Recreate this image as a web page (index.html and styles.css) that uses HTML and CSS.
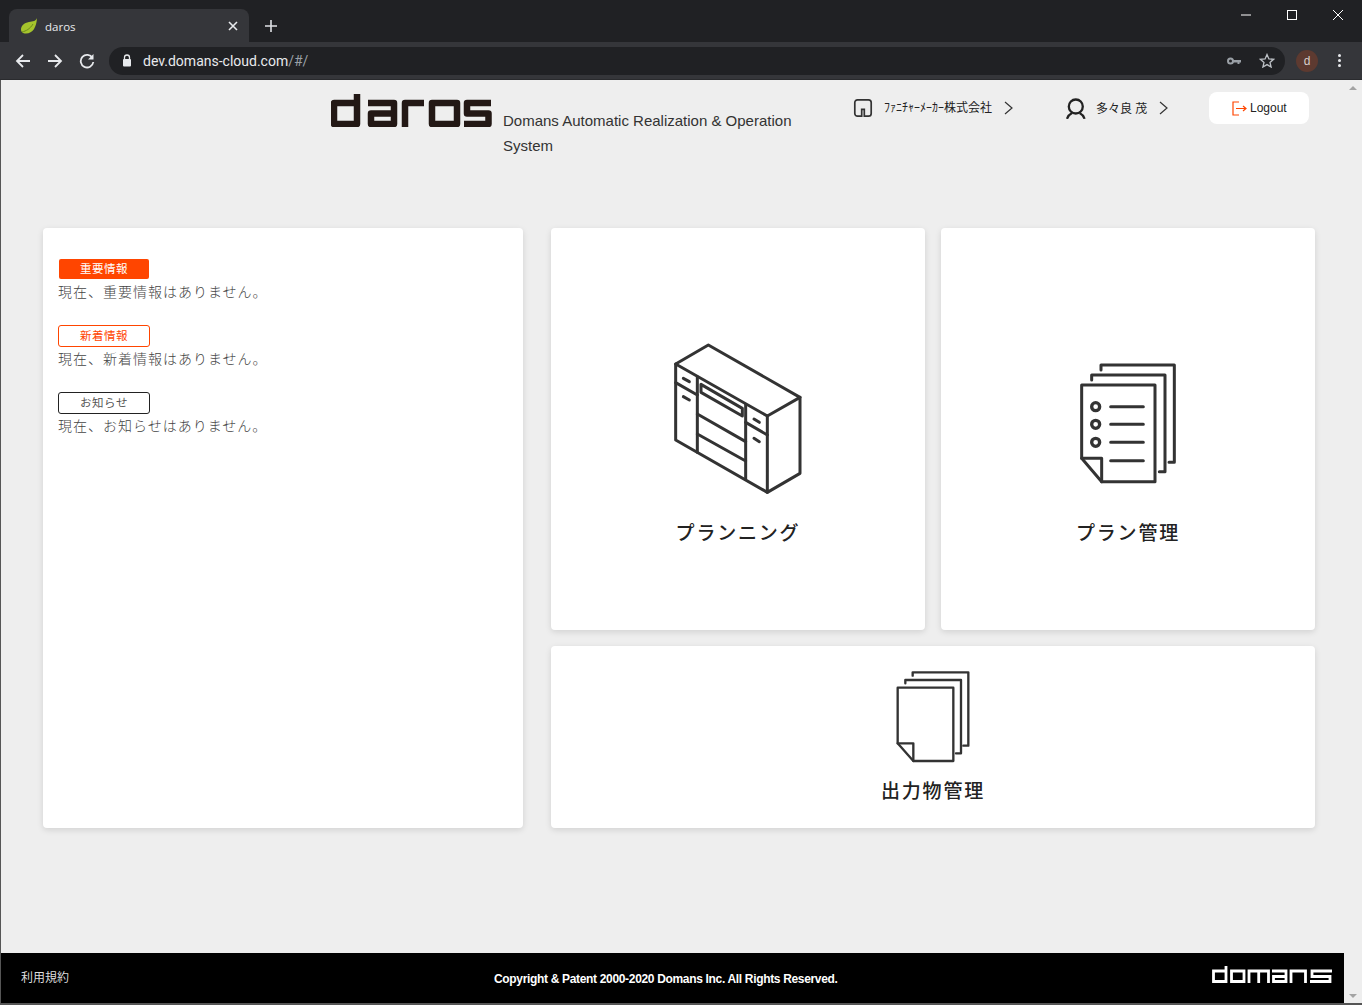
FILE: index.html
```html
<!DOCTYPE html>
<html lang="ja">
<head>
    <meta charset="UTF-8">
    <title>daros</title>
    <link rel="stylesheet" href="styles.css">
</head>
<body>
    <div class="browser">
        <div class="tabstrip">
            <div class="tab">
                <svg class="favicon" width="16" height="16" viewBox="0 0 16 16"><path d="M16 0C15 3 12 3.500 8 4 3 4.700 0 8 0 11.500 0 13.500 1.500 15.500 5 15.500 12 15.500 15.500 9 16 0Z" fill="#a5c42c"/><path d="M1 14C5 13 9 11 12 6" stroke="#6d8a1c" stroke-width="1" fill="none"/></svg>
                <span class="tab-title">daros</span>
                <svg class="tab-close" width="10" height="10" viewBox="0 0 10 10"><path d="M1 1L9 9M9 1L1 9" stroke="#e8eaed" stroke-width="1.600"/></svg>
            </div>
            <svg class="new-tab" width="12" height="12" viewBox="0 0 12 12"><path d="M6 0V12M0 6H12" stroke="#dfe1e5" stroke-width="1.600"/></svg>
            <div class="win-controls">
                <svg width="10" height="10" viewBox="0 0 10 10"><path d="M0 5H10" stroke="#fff"/></svg>
                <svg width="10" height="10" viewBox="0 0 10 10"><rect x="0.500" y="0.500" width="9" height="9" fill="none" stroke="#fff"/></svg>
                <svg width="10" height="10" viewBox="0 0 10 10"><path d="M0 0L10 10M10 0L0 10" stroke="#fff"/></svg>
            </div>
        </div>
        <div class="toolbar">
            <svg class="nav-icon" width="16" height="16" viewBox="0 0 16 16"><path d="M15 8H2M8 2L2 8L8 14" fill="none" stroke="#e8eaed" stroke-width="1.800"/></svg>
            <svg class="nav-icon" width="16" height="16" viewBox="0 0 16 16"><path d="M1 8H14M8 2L14 8L8 14" fill="none" stroke="#e8eaed" stroke-width="1.800"/></svg>
            <svg class="nav-icon" width="16" height="16" viewBox="0 0 16 16"><path d="M13.500 5A6.300 6.300 0 1 0 14.300 9" fill="none" stroke="#e8eaed" stroke-width="1.800"/><path d="M14.500 1V6.500H9Z" fill="#e8eaed"/></svg>
            <div class="omnibox">
                <svg class="lock" width="10" height="13" viewBox="0 0 10 13"><path d="M2.500 6V3.500a2.500 2.500 0 0 1 5 0V6" fill="none" stroke="#e8eaed" stroke-width="1.300"/><rect x="1" y="5" width="8" height="7.500" rx="1" fill="#e8eaed"/></svg>
                <span class="url">dev.domans-cloud.com<span class="url-path">/#/</span></span>
                <svg class="key" width="14" height="8" viewBox="0 0 14 8"><circle cx="3.500" cy="4" r="2.500" fill="none" stroke="#9aa0a6" stroke-width="2"/><path d="M6 3H14V5.500H12.500V7H10.500V5.500H6Z" fill="#9aa0a6"/></svg>
                <svg class="star" width="16" height="15" viewBox="0 0 16 15"><path d="M8 1.500L9.900 5.900 14.600 6.300 11 9.400 12.100 14 8 11.600 3.900 14 5 9.400 1.400 6.300 6.100 5.900Z" fill="none" stroke="#bdc1c6" stroke-width="1.300"/></svg>
            </div>
            <span class="avatar">d</span>
            <span class="menu-dots"><i></i><i></i><i></i></span>
        </div>
        <div class="viewport">
            <div class="page">
                <header class="header">
                    <svg class="logo" width="161" height="34" viewBox="0 0 161 34" role="img" aria-label="daros">
                        <g fill="none" stroke="#231815" stroke-width="6.500" stroke-linejoin="round">
                            <path d="M26 1V31H3V10H26"/>
                            <path d="M37 10H63V31H40V20.500H63"/>
                            <path d="M74 34V10H93"/>
                            <path d="M101 10H126V31H101Z"/>
                            <path d="M160 10H136V20.500H157.500V31H133"/>
                        </g>
                    </svg>
                    <p class="tagline">Domans Automatic Realization &amp; Operation System</p>
                    <div class="head-item org">
                        <svg width="20" height="20" viewBox="0 0 20 20"><path d="M4.500 1.800H15.500A2.700 2.700 0 0 1 18.200 4.500V15.500A2.700 2.700 0 0 1 15.500 18.200H11.300V11.400H8.700V18.200H4.500A2.700 2.700 0 0 1 1.800 15.500V4.500A2.700 2.700 0 0 1 4.500 1.800Z" fill="none" stroke="#333" stroke-width="1.700"/></svg>
                        <span class="org-name">ﾌｧﾆﾁｬｰﾒｰｶｰ株式会社</span>
                        <svg class="chevron" width="9" height="14" viewBox="0 0 9 14"><path d="M1 1L8 7L1 13" fill="none" stroke="#333" stroke-width="1.200"/></svg>
                    </div>
                    <div class="head-item user">
                        <svg width="20" height="21" viewBox="0 0 20 21"><circle cx="9.800" cy="8.500" r="7" fill="none" stroke="#222" stroke-width="2.300"/><path d="M1 20.800C2 18 4 16 6 15M18.600 20.800C17.600 18 15.600 16 13.600 15" fill="none" stroke="#222" stroke-width="2.300"/></svg>
                        <span class="user-name">多々良 茂</span>
                        <svg class="chevron" width="9" height="14" viewBox="0 0 9 14"><path d="M1 1L8 7L1 13" fill="none" stroke="#333" stroke-width="1.200"/></svg>
                    </div>
                    <a class="logout">
                        <svg width="15" height="15" viewBox="0 0 15 15"><path d="M7 1H1V14H7M4 7.500H14M11 5L14 7.500L11 10" fill="none" stroke="#ff4500" stroke-width="1.200"/></svg>
                        <span>Logout</span>
                    </a>
                </header>

                <main class="main">
                    <section class="card news">
                        <div class="news-block">
                            <div class="badge badge-important">重要情報</div>
                            <p class="news-text">現在、重要情報はありません。</p>
                        </div>
                        <div class="news-block">
                            <div class="badge badge-new">新着情報</div>
                            <p class="news-text">現在、新着情報はありません。</p>
                        </div>
                        <div class="news-block">
                            <div class="badge badge-info">お知らせ</div>
                            <p class="news-text">現在、お知らせはありません。</p>
                        </div>
                    </section>
                    <div class="menu">
                        <a class="card menu-card">
                            <svg class="menu-icon" width="155" height="165" viewBox="0 0 465 495">
                                <g fill="none" stroke="#333" stroke-width="9" stroke-linejoin="round" stroke-linecap="round">
                                    <path d="M47 87L145 30L420 187L322 243Z"/>
                                    <path d="M322 243V472L420 415V187"/>
                                    <path d="M47 87V315L322 472"/>
                                    <path d="M112 125V352M257 208V433"/>
                                    <path d="M47 143L112 180M257 262L322 300"/>
                                    <path d="M112 237L257 320M112 297L257 378"/>
                                    <path d="M123 148L247 220V243L123 172Z"/>
                                    <path d="M70 130L88 140M70 185L88 195M282 252L298 262M282 310L298 320"/>
                                </g>
                            </svg>
                            <span class="menu-title">プランニング</span>
                        </a>
                        <a class="card menu-card">
                            <svg class="menu-icon plan-icon" width="115" height="135" viewBox="0 0 345 405">
                                <g fill="none" stroke="#333" stroke-width="9" stroke-linejoin="round" stroke-linecap="round">
                                    <path d="M35 90H255V380H95L35 310Z"/>
                                    <path d="M35 310H95V380"/>
                                    <path d="M65 75V60H285V350H268"/>
                                    <path d="M93 45V30H313V322H297"/>
                                    <circle cx="77" cy="155" r="12" stroke-width="10"/>
                                    <circle cx="77" cy="208" r="12" stroke-width="10"/>
                                    <circle cx="77" cy="262" r="12" stroke-width="10"/>
                                    <path d="M122 155H220M122 208H220M122 262H220M122 317H220"/>
                                </g>
                            </svg>
                            <span class="menu-title">プラン管理</span>
                        </a>
                        <a class="card menu-card menu-wide">
                            <svg class="output-icon" width="110" height="100" viewBox="0 0 330 300">
                                <g fill="none" stroke="#333" stroke-width="7" stroke-linejoin="round" stroke-linecap="round">
                                    <path d="M53 68H220V288H100L53 235Z"/>
                                    <path d="M53 235H100V288"/>
                                    <path d="M76 55V45H243V265H228"/>
                                    <path d="M98 32V22H265V242H250"/>
                                </g>
                            </svg>
                            <span class="menu-title">出力物管理</span>
                        </a>
                    </div>
                </main>

                <footer class="footer">
                    <a class="terms">利用規約</a>
                    <span class="copyright">Copyright &amp; Patent 2000-2020 Domans Inc. All Rights Reserved.</span>
                    <svg class="domans" width="120" height="18" viewBox="0 0 120 18" role="img" aria-label="domans">
                        <g fill="none" stroke="#fff" stroke-width="2.800">
                            <path d="M14 0V15.500H1.500V5H14"/>
                            <path d="M19.500 5H32V15.500H19.500Z"/>
                            <path d="M37 17V5H56.500V17M46.700 5V17"/>
                            <path d="M60 5H74V15.500H61.500V10.500H74"/>
                            <path d="M79 17V5H93.500V17"/>
                            <path d="M120 5H100V10.500H118V15.500H98"/>
                        </g>
                    </svg>
                </footer>
            </div>
            <div class="scrollbar">
                <span class="arrow-up"></span>
                <span class="arrow-down"></span>
            </div>
        </div>
    </div>
</body>
</html>
```

FILE: styles.css
```css
* {
    padding: 0;
    margin: 0;
    box-sizing: border-box;
}

body {
    font-family: "Liberation Sans", "Noto Sans CJK JP", sans-serif;
    background-color: #eeeeee;
    overflow: hidden;
}

svg {
    display: block;
    flex-shrink: 0;
}

.browser {
    display: flex;
    flex-direction: column;
    height: 1005px;
}

/* browser chrome */
.tabstrip {
    display: flex;
    align-items: flex-end;
    height: 42px;
    padding-left: 9px;
    background-color: #202124;
}

.tab {
    display: flex;
    align-items: center;
    width: 240px;
    height: 33px;
    padding: 1px 11px 0 12px;
    background-color: #35363a;
    border-radius: 8px 8px 0 0;
}

.tab-title {
    flex: 1;
    margin-left: 8px;
    font-family: "Open Sans", sans-serif;
    font-size: 11.500px;
    color: #e8eaed;
}

.new-tab {
    margin: 0 0 10px 16px;
}

.win-controls {
    display: flex;
    gap: 36px;
    margin: 0 19px 22px auto;
}

.toolbar {
    display: flex;
    align-items: center;
    height: 38px;
    padding-left: 15px;
    background-color: #35363a;
    border-bottom: 1px solid #2a2b2e;
}

.nav-icon {
    margin-right: 16px;
}

.omnibox {
    display: flex;
    align-items: center;
    width: 1176px;
    height: 28px;
    margin-left: -2px;
    padding: 0 10px 0 13px;
    background-color: #202124;
    border-radius: 14px;
}

.url {
    flex: 1;
    margin-left: 11px;
    font-family: "Roboto", sans-serif;
    font-size: 14px;
    color: #e8eaed;
}

.url-path {
    color: #9aa0a6;
}

.star {
    margin-left: 18px;
}

.avatar {
    display: flex;
    align-items: center;
    justify-content: center;
    width: 22px;
    height: 22px;
    margin-left: 11px;
    border-radius: 50%;
    background-color: #5d3a30;
    color: #d8cfcb;
    font-size: 12px;
}

.menu-dots {
    display: flex;
    flex-direction: column;
    gap: 2px;
    margin-left: 20px;
}

.menu-dots i {
    display: block;
    width: 3px;
    height: 3px;
    border-radius: 50%;
    background-color: #e8eaed;
}

/* page */
.viewport {
    display: flex;
    flex: 1;
    min-height: 0;
}

.page {
    display: flex;
    flex: 1;
    flex-direction: column;
    background-color: #eeeeee;
    border-left: 1px solid #555;
    border-bottom: 2px solid #555;
}

.scrollbar {
    display: flex;
    flex-direction: column;
    justify-content: space-between;
    align-items: center;
    width: 18px;
    padding: 6px 0 5px;
    background-color: #eeeeee;
    border-bottom: 2px solid #555;
}

.arrow-up {
    border: 4px solid transparent;
    border-top: 0;
    border-bottom: 4px solid #a3a3a3;
}

.arrow-down {
    border: 4px solid transparent;
    border-bottom: 0;
    border-top: 4px solid #a3a3a3;
}

.header {
    display: flex;
    align-items: flex-start;
    height: 148px;
    padding-left: 330px;
}

.logo {
    margin-top: 13px;
}

.tagline {
    width: 310px;
    margin: 28px 0 0 11px;
    font-size: 15px;
    line-height: 25px;
    color: #333;
}

.head-item {
    display: flex;
    align-items: center;
    margin-top: 18px;
    height: 20px;
}

.org {
    margin-left: 40px;
}

.org-name {
    margin: 0 12px 0 11px;
    font-size: 12px;
    color: #222;
    line-height: 16px;
}

.user {
    margin-left: 53px;
}

.user-name {
    margin: 0 12px 2px 10px;
    font-size: 12px;
    color: #222;
}

.logout {
    display: flex;
    align-items: center;
    justify-content: center;
    gap: 3px;
    width: 100px;
    height: 32px;
    margin: 12px 0 0 41px;
    background-color: #fff;
    border-radius: 8px;
    font-size: 12px;
    color: #222;
}

.main {
    display: flex;
    gap: 28px;
    padding-left: 42px;
}

.card {
    background-color: #fff;
    border-radius: 4px;
    box-shadow: 0 2px 6px rgba(0, 0, 0, 0.12);
}

.news {
    width: 480px;
    height: 600px;
    padding: 31px 15px;
}

.news-block {
    margin-bottom: 22px;
}

.badge {
    display: flex;
    align-items: center;
    justify-content: center;
    width: 92px;
    height: 22px;
    padding-bottom: 3px;
    border: 1px solid #222;
    border-radius: 3px;
    font-size: 11.500px;
    letter-spacing: 0.500px;
    color: #555;
}

.badge-important {
    width: 90px;
    height: 20px;
    margin-left: 1px;
    padding-bottom: 2px;
    background-color: #ff4500;
    border: 0;
    border-radius: 2px;
    color: #fff;
}

.badge-new {
    border-color: #ff4500;
    color: #ff4500;
}

.news-text {
    margin-top: 2px;
    font-size: 14px;
    line-height: 21px;
    letter-spacing: 1px;
    font-weight: 300;
    color: #444;
}

.badge-important + .news-text {
    margin-top: 3px;
}

.menu {
    display: grid;
    grid-template-columns: 374px 374px;
    grid-template-rows: 402px 182px;
    gap: 16px;
}

.menu-card {
    display: flex;
    flex-direction: column;
    align-items: center;
    padding-top: 107px;
}

.menu-icon {
    margin-left: -2px;
}

.plan-icon {
    margin-top: 20px;
    margin-bottom: 10px;
}

.output-icon {
    margin-left: 4px;
}

.menu-title {
    margin-top: 21px;
    font-size: 19px;
    font-weight: 500;
    line-height: 26px;
    letter-spacing: 1.800px;
    color: #222;
}

.menu-wide {
    grid-column: 1 / 3;
    padding-top: 19px;
}

.menu-wide .menu-title {
    margin-top: 14px;
}

.footer {
    display: flex;
    align-items: center;
    height: 50px;
    margin-top: auto;
    padding: 0 12px 0 20px;
    background-color: #000;
    color: #fff;
    font-size: 12px;
}

.terms {
    margin-bottom: 4px;
    color: #ddd;
}

.copyright {
    margin: 2px 0 0 425px;
    font-weight: bold;
    letter-spacing: -0.330px;
}

.domans {
    margin: 0 0 7px auto;
}
```
